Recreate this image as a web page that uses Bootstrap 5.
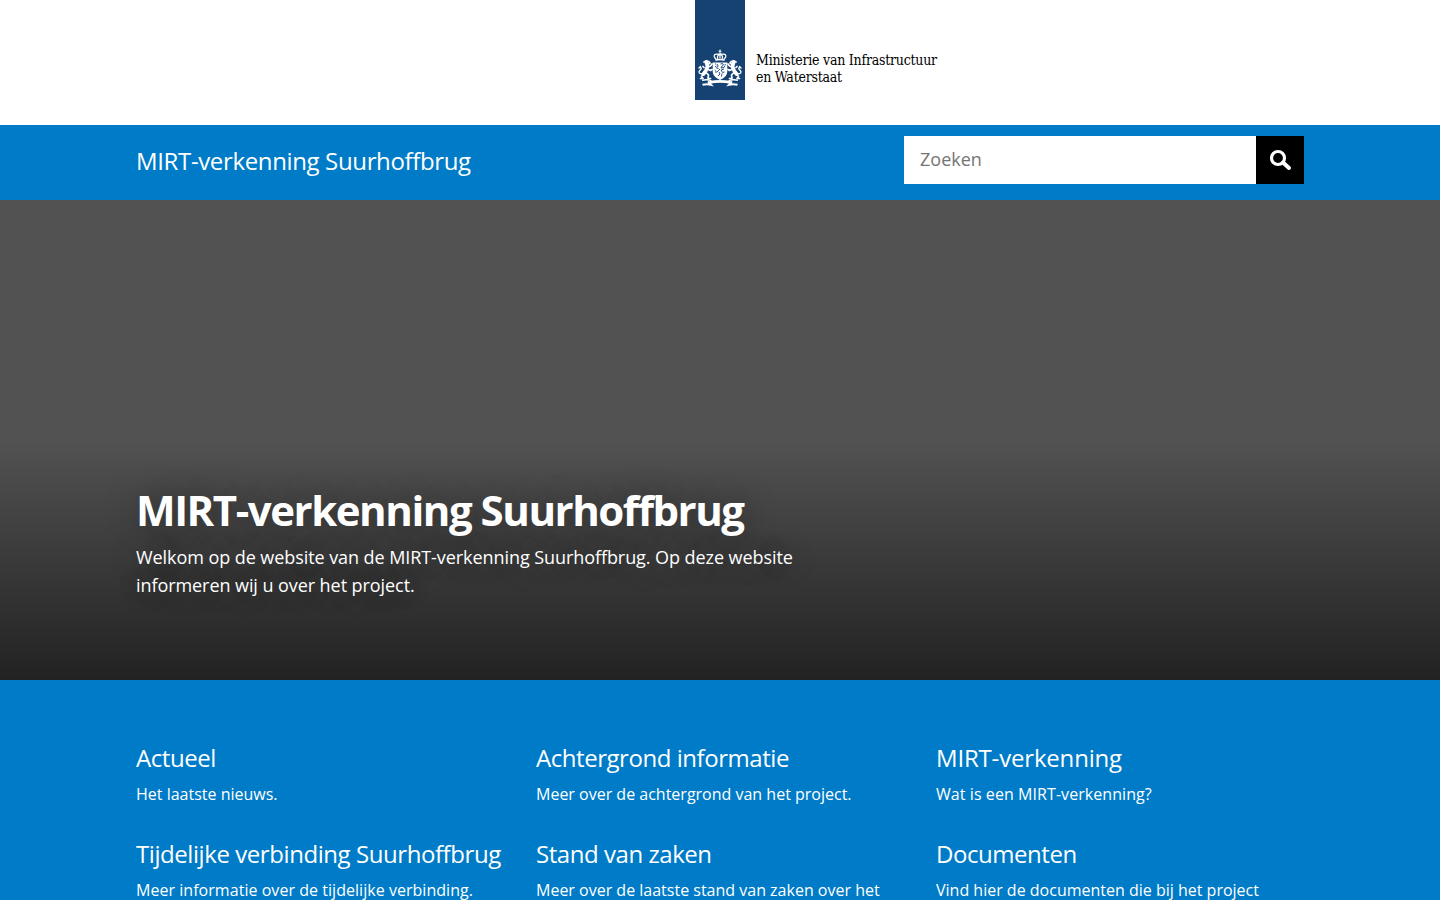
<!DOCTYPE html>
<html lang="nl">
<head>
<meta charset="utf-8">
<meta name="viewport" content="width=device-width, initial-scale=1">
<title>MIRT-verkenning Suurhoffbrug</title>
<link href="https://cdn.jsdelivr.net/npm/bootstrap@5.3.0/dist/css/bootstrap.min.css" rel="stylesheet">
<style>
:root{--hemelblauw:#007bc7;--lint:#154273}
body{font-family:"Open Sans","Noto Sans",sans-serif;color:#fff;background:var(--hemelblauw);overflow:hidden}
.wrap{width:1168px;margin:0 auto}
.masthead{height:125px;padding-left:695px}
.ministry{font:14px/17px "DejaVu Serif Condensed","DejaVu Serif",serif;font-stretch:condensed;letter-spacing:-.23px;color:#000;padding:52px 0 0 11px;white-space:nowrap}
.title-bar{height:75px;background:var(--hemelblauw)}
.site-name{font-size:24px;line-height:34px;letter-spacing:-.36px;padding-top:19px}
.search{width:400px;height:48px;margin-top:11px}
.search .form-control{font-size:18px;line-height:26px;color:#000;padding:10px 16px 12px;background:#fff}
.search .form-control::placeholder{color:#757575;opacity:1}
.search .btn{width:48px;background:#000}
.hero{height:480px;background:linear-gradient(#525252 50%,#222)}
.hero-copy{width:700px;padding-top:282px;text-shadow:0 0 32px rgba(0,0,0,.35)}
.hero h1{font-size:42px;line-height:56px;font-weight:700;letter-spacing:-1.46px;margin:0 0 5px;white-space:nowrap}
.hero p{font-size:18px;line-height:28px;letter-spacing:-.07px;margin:0}
.themes{padding-top:60px}
.themes .grid{display:grid;grid-template-columns:repeat(3,368px);gap:32px}
.themes article{height:64px}
.themes h2{font-size:24px;line-height:36px;font-weight:400;letter-spacing:-.45px;margin:0;white-space:nowrap}
.themes .mirt h2{letter-spacing:-.18px}
.themes .mirt p{letter-spacing:.07px}
.themes .tijdelijk h2{letter-spacing:-.43px}
.themes .tijdelijk p{letter-spacing:.04px}
.themes p{font-size:16px;line-height:24px;margin:6px 0 0}
</style>
</head>
<body>
<header class="masthead d-flex bg-white">
  <svg width="50" height="100" viewBox="0 0 50 100" role="img" aria-label="Rijksoverheid" class="flex-shrink-0">
    <path fill="#154273" d="M0 0h50v100H0z"/>
    <!-- crown -->
    <g fill="none" stroke="#fff" stroke-linecap="round">
      <path stroke-width="1" d="M25 50v3M24 51.2h2"/>
      <path stroke-width="1.3" stroke-dasharray=".9 .6" d="M21 59C17.500 55.8 19.500 53.800 22.5 54.2L25 54l2.500.2C30.500 53.800 32.500 55.800 29 59M25 54v4M22.800 58.500C22 56 23 55 25 54.500M27.200 58.500C28 56 27 55 25 54.500"/>
      <path stroke-width="1.600" d="M21 60q4-1 8 0"/>
    </g>
    <!-- shield with lion -->
    <path fill="#fff" d="M17.700 62.500h14.600v9q0 5.500-7.300 8.500-7.300-3-7.300-8.500z"/>
    <path fill="none" stroke="#154273" stroke-width=".9" d="M20 64h1M20 67l1.500-1M22 64l1.200 2-1.700 2 2 .5M25.500 64l2-.5 1 1.500-1.500 1-1 2 3-.5 1-2M29 69l-3 1 1.500 2.500 2-.5M25 69l-3 3h-2M24 72l1 2-2 2M27 73.500l-.5 3M19.800 70l1 .5M30.500 64l-.5 1"/>
    <!-- supporting lions -->
    <g id="supporter" fill="none" stroke="#fff" stroke-linecap="round" stroke-linejoin="round">
      <path stroke-width="3.800" d="M11.500 62.800l1 3.500-1.200 3.700-2.800 4"/>
      <path stroke-width="1.700" d="M9 62l2.300-1.300 2.500.8 1.200 1.500-1.600 1M13 67l2.500-1 1.500-2M12.500 69l3 1.500 1.500-1M8.500 74l-2 2.500 1.500 2H5.500M11 72.500l2.500 2.500-.5 3.500h2.500M8 66.500l1 1"/>
      <path stroke-width="1.300" d="M8 73.500c-4 1-5-1.500-3-3.300s2-2.700-.7-2.900M5.500 66.500L4 68"/>
    </g>
    <use href="#supporter" transform="matrix(-1 0 0 1 50 0)"/>
    <!-- motto ribbon -->
    <g fill="none" stroke="#fff">
      <path stroke-width="1.500" d="M7 80.300q6-1.300 9.500.8M43 80.300q-6-1.300-9.500.8"/>
      <path stroke-width="2.600" d="M14.500 82.400q10.500-2 21 0"/>
      <path stroke-width="2" d="M7.500 84.800q4-1 8.500 0l-3-3.300M42.500 84.800q-4-1-8.500 0l3-3.300"/>
    </g>
  </svg>
  <div class="ministry"><div>Ministerie van Infrastructuur</div><div>en Waterstaat</div></div>
</header>
<div class="title-bar">
  <div class="wrap d-flex justify-content-between align-items-start">
    <div class="site-name">MIRT-verkenning Suurhoffbrug</div>
    <form class="search d-flex">
      <input class="form-control border-0 rounded-0 shadow-none" type="text" placeholder="Zoeken" aria-label="Zoeken">
      <button class="btn border-0 rounded-0 p-0 flex-shrink-0 d-flex" type="button" aria-label="Zoek">
        <svg width="48" height="48" viewBox="0 0 48 48" fill="none" stroke="#fff"><circle cx="22" cy="22" r="6.500" stroke-width="3.200"/><path d="M27 26.500l6 5.500" stroke-width="4" stroke-linecap="round"/></svg>
      </button>
    </form>
  </div>
</div>
<section class="hero">
  <div class="wrap"><div class="hero-copy">
    <h1>MIRT-verkenning Suurhoffbrug</h1>
    <p>Welkom op de website van de MIRT-verkenning Suurhoffbrug. Op deze website<br>informeren wij u over het project.</p>
  </div></div>
</section>
<main class="themes">
  <div class="wrap grid">
    <article><h2>Actueel</h2><p>Het laatste nieuws.</p></article>
    <article><h2>Achtergrond informatie</h2><p>Meer over de achtergrond van het project.</p></article>
    <article class="mirt"><h2>MIRT-verkenning</h2><p>Wat is een MIRT-verkenning?</p></article>
    <article class="tijdelijk"><h2>Tijdelijke verbinding Suurhoffbrug</h2><p>Meer informatie over de tijdelijke verbinding.</p></article>
    <article><h2>Stand van zaken</h2><p>Meer over de laatste stand van zaken over het</p></article>
    <article><h2>Documenten</h2><p>Vind hier de documenten die bij het project</p></article>
  </div>
</main>
<script src="https://cdn.jsdelivr.net/npm/bootstrap@5.3.0/dist/js/bootstrap.bundle.min.js"></script>
</body>
</html>
